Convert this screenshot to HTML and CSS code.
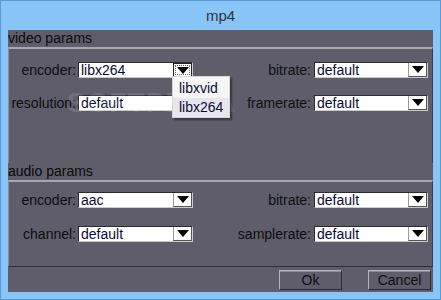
FILE: index.html
```html
<!DOCTYPE html>
<html lang="en">
<head>
  <meta charset="UTF-8">
  <title>mp4</title>
  <link rel="stylesheet" href="styles.css">
</head>
<body>
<div class="window">
  <div class="titlebar">mp4</div>
  <div class="panel">
    <div class="sect-title">video params</div>
    <div class="group video">
      <label class="lbl">encoder:</label>
      <div class="combo focus"><span class="value">libx264</span><span class="arrow"><i></i></span></div>
      <label class="lbl lbl-r">bitrate:</label>
      <div class="combo"><span class="value">default</span><span class="arrow"><i></i></span></div>

      <label class="lbl">resolution:</label>
      <div class="combo"><span class="value">default</span><span class="arrow"><i></i></span></div>
      <label class="lbl lbl-r">framerate:</label>
      <div class="combo"><span class="value">default</span><span class="arrow"><i></i></span></div>
    </div>

    <div class="sect-title">audio params</div>
    <div class="group audio">
      <label class="lbl">encoder:</label>
      <div class="combo"><span class="value">aac</span><span class="arrow"><i></i></span></div>
      <label class="lbl lbl-r">bitrate:</label>
      <div class="combo"><span class="value">default</span><span class="arrow"><i></i></span></div>

      <label class="lbl">channel:</label>
      <div class="combo"><span class="value">default</span><span class="arrow"><i></i></span></div>
      <label class="lbl lbl-r">samplerate:</label>
      <div class="combo"><span class="value">default</span><span class="arrow"><i></i></span></div>
    </div>

    <div class="buttons">
      <button class="btn">Ok</button>
      <button class="btn">Cancel</button>
    </div>
  </div>

  <div class="watermark">SOFTPEDIA</div>

  <ul class="popup">
    <li>libxvid</li>
    <li class="sel">libx264</li>
  </ul>
</div>
</body>
</html>
```

FILE: styles.css
```css
* {
  margin: 0;
  padding: 0;
  box-sizing: border-box;
}

body {
  font-family: "Liberation Sans", Arial, sans-serif;
  font-size: 14px;
  color: #111;
}

.window {
  position: relative;
  width: 441px;
  height: 300px;
  border: 1px solid #5b9ad6;
  background: #89c5f7;
  padding: 0 7px 7px 7px;
  display: flex;
  flex-direction: column;
}

.titlebar {
  height: 29px;
  line-height: 30px;
  text-align: center;
  font-size: 15px;
  color: #2e3440;
}

.panel {
  flex: 1;
  background: #5e5d69;
  display: flex;
  flex-direction: column;
}

.sect-title {
  height: 17px;
  line-height: 17px;
  color: #0a0a0a;
  font-size: 14px;
}

.group {
  display: grid;
  grid-template-columns: 69px 115px 1fr 114px;
  grid-auto-rows: 16px;
  align-items: center;
  border-top: 2px solid #a6a6ac;
  border-left: 1px solid #8f8f98;
  border-right: 1px solid #3c3c46;
  padding-right: 4px;
}

.video {
  height: 116px;
  padding-top: 13px;
  row-gap: 17px;
  align-content: start;
}

.audio {
  height: 87px;
  padding-top: 10px;
  row-gap: 18px;
  align-content: start;
  border-bottom: 1px solid #2e2e36;
}

.lbl {
  text-align: right;
  padding-right: 2px;
  line-height: 16px;
  color: #0d0d12;
  white-space: nowrap;
}

.lbl-r {
  padding-right: 3px;
}

.combo {
  height: 16px;
  display: flex;
  background: #fff;
  border: 1px solid;
  border-color: #2a2a32 #c9c9ce #c9c9ce #2a2a32;
}

.value {
  flex: 1;
  padding-left: 2px;
  line-height: 14px;
  color: #0b0b33;
}

.arrow {
  width: 19px;
  display: flex;
  align-items: center;
  justify-content: center;
  background: #fff;
  border-left: 1px solid #9a9a9a;
  border-right: 1px solid #555;
  border-bottom: 1px solid #555;
}

.arrow i {
  width: 0;
  height: 0;
  border-left: 6px solid transparent;
  border-right: 6px solid transparent;
  border-top: 7px solid #000;
}

.focus .arrow {
  border: 1px solid #222;
  outline: 1px dotted #666;
  outline-offset: -3px;
}

.buttons {
  flex: 1;
  display: flex;
  justify-content: flex-end;
  align-items: flex-start;
  gap: 26px;
  padding: 3px 2px 0 0;
}

.btn {
  width: 63px;
  height: 20px;
  background: #5e5d69;
  border: 1px solid;
  border-color: #b4b4ba #2c2c34 #2c2c34 #b4b4ba;
  box-shadow: inset 0 1px 0 #8a8a92;
  font-family: "Liberation Sans", Arial, sans-serif;
  font-size: 14px;
  color: #0d0d12;
}

.popup {
  position: absolute;
  left: 171px;
  top: 75px;
  width: 58px;
  height: 42px;
  list-style: none;
  background: #f6f6f6;
  border: 1px solid #d8d8d8;
  box-shadow: 2px 2px 2px rgba(0, 0, 0, 0.45);
  padding-top: 2px;
}

.popup li {
  height: 19px;
  line-height: 19px;
  padding-left: 6px;
  color: #0b0b33;
}

.popup .sel {
  background: #e6e6ec;
}

.watermark {
  position: absolute;
  left: 66px;
  top: 86px;
  font-size: 28px;
  font-weight: bold;
  letter-spacing: 1px;
  color: rgba(255, 255, 255, 0.13);
  pointer-events: none;
}
```
